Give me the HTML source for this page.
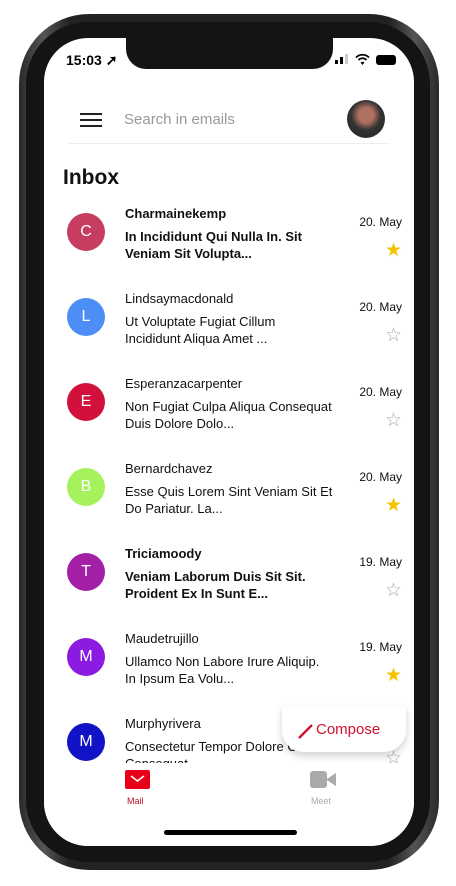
<!DOCTYPE html>
<html><head><meta charset="utf-8"><style>
*{margin:0;padding:0;box-sizing:border-box}
body{width:456px;height:886px;background:#fff;position:relative;overflow:hidden;font-family:"Liberation Sans",sans-serif}
.phone{position:absolute;left:19px;top:14px;width:420px;height:856px;border-radius:70px;background:linear-gradient(90deg,#2a2a2a,#555 6%,#222 12%,#222 88%,#555 94%,#2a2a2a);}
.bezel{position:absolute;left:26px;top:22px;width:404px;height:840px;border-radius:62px;background:#141414}
.screen{position:absolute;left:44px;top:38px;width:370px;height:808px;border-radius:44px;background:#fff;overflow:hidden}
.notch{position:absolute;left:82px;top:0;width:207px;height:31px;background:#141414;border-radius:0 0 20px 20px}
.abs{position:absolute}
.av{position:absolute;left:23px;width:38px;height:38px;border-radius:50%;color:#fff;font-size:16px;text-align:center;line-height:38px}
.nm{position:absolute;left:81px;font-size:13px;color:#111}
.sb{position:absolute;left:81px;font-size:13px;color:#111;line-height:17px;width:220px}
.dt{position:absolute;right:12px;font-size:12px;color:#111}
.st{position:absolute;right:12px;font-size:19px;line-height:19px}
.b{font-weight:bold}
</style></head><body>
<div class="phone"></div>
<div class="bezel"></div>
<div class="screen">
 <div class="notch"></div>
 <div class="abs" style="left:22px;top:14px;font-size:14px;font-weight:bold;color:#000">15:03 ➚</div>
 <div class="abs" style="left:291px;top:22px;width:3px;height:4px;background:#000"></div>
 <div class="abs" style="left:296px;top:19px;width:3px;height:7px;background:#000"></div>
 <div class="abs" style="left:301px;top:16px;width:3px;height:10px;background:#ccc"></div>
 <svg class="abs" style="left:311px;top:15px" width="15" height="12"><path d="M1 4.5A9 9 0 0 1 14 4.5M3.5 7A5.5 5.5 0 0 1 11.5 7" stroke="#000" stroke-width="1.8" fill="none"/><path d="M5.5 9.5L7.5 12L9.5 9.5A3 3 0 0 0 5.5 9.5Z" fill="#000"/></svg>
 <div class="abs" style="left:332px;top:17px;width:20px;height:10px;background:#000;border-radius:3px"></div>
 <svg class="abs" style="left:35px;top:74px" width="24" height="16"><path d="M1 2H23M1 8H23M1 14H23" stroke="#222" stroke-width="2"/></svg>
 <div class="abs" style="left:80px;top:73px;font-size:15px;color:#999">Search in emails</div>
 <div class="abs" style="left:303px;top:62px;width:38px;height:38px;border-radius:50%;background:radial-gradient(circle at 50% 40%,#b07060 0 25%,#333 50%,#222)"></div>
 <div class="abs" style="left:24px;top:105px;width:322px;height:1px;background:#eee"></div>
 <div class="abs b" style="left:19px;top:128px;font-size:21px;color:#111">Inbox</div>

 <div class="av" style="top:175px;background:#c63d5f">C</div>
 <div class="nm b" style="top:168px">Charmainekemp</div>
 <div class="sb b" style="top:190px">In Incididunt Qui Nulla In. Sit Veniam Sit Volupta...</div>
 <div class="dt" style="top:177px">20. May</div>
 <div class="st" style="top:203px;color:#f5c400">★</div>

 <div class="av" style="top:260px;background:#4c8ef6">L</div>
 <div class="nm" style="top:253px">Lindsaymacdonald</div>
 <div class="sb" style="top:275px">Ut Voluptate Fugiat Cillum<br>Incididunt Aliqua Amet ...</div>
 <div class="dt" style="top:262px">20. May</div>
 <div class="st" style="top:288px;color:#aaa">☆</div>

 <div class="av" style="top:345px;background:#d2103c">E</div>
 <div class="nm" style="top:338px">Esperanzacarpenter</div>
 <div class="sb" style="top:360px">Non Fugiat Culpa Aliqua Consequat Duis Dolore Dolo...</div>
 <div class="dt" style="top:347px">20. May</div>
 <div class="st" style="top:373px;color:#aaa">☆</div>

 <div class="av" style="top:430px;background:#a6f25c">B</div>
 <div class="nm" style="top:423px">Bernardchavez</div>
 <div class="sb" style="top:445px">Esse Quis Lorem Sint Veniam Sit Et Do Pariatur. La...</div>
 <div class="dt" style="top:432px">20. May</div>
 <div class="st" style="top:458px;color:#f5c400">★</div>

 <div class="av" style="top:515px;background:#a21fa6">T</div>
 <div class="nm b" style="top:508px">Triciamoody</div>
 <div class="sb b" style="top:530px">Veniam Laborum Duis Sit Sit. Proident Ex In Sunt E...</div>
 <div class="dt" style="top:517px">19. May</div>
 <div class="st" style="top:543px;color:#aaa">☆</div>

 <div class="av" style="top:600px;background:#8b1be0">M</div>
 <div class="nm" style="top:593px">Maudetrujillo</div>
 <div class="sb" style="top:615px">Ullamco Non Labore Irure Aliquip.<br>In Ipsum Ea Volu...</div>
 <div class="dt" style="top:602px">19. May</div>
 <div class="st" style="top:628px;color:#f5c400">★</div>

 <div class="av" style="top:685px;background:#1212c6">M</div>
 <div class="nm" style="top:678px">Murphyrivera</div>
 <div class="sb" style="top:700px;height:25px;overflow:hidden">Consectetur Tempor Dolore Cillum Consequat</div>
 <div class="st" style="top:711px;color:#aaa">☆</div>

 <div class="abs" style="left:238px;top:668px;width:124px;height:46px;border-radius:0 0 22px 22px;background:#fff;box-shadow:0 4px 8px rgba(0,0,0,.18)"></div>
 <svg class="abs" style="left:253px;top:684px" width="18" height="18"><path d="M2 16L15 3" stroke="#d01030" stroke-width="2.4"/></svg>
 <div class="abs" style="left:272px;top:683px;font-size:15px;color:#d01030">Compose</div>

 <div class="abs" style="left:0;top:725px;width:370px;height:83px;background:#fff"></div>
 <div class="abs" style="left:81px;top:732px;width:25px;height:19px;background:#e8001a;border-radius:2px"></div>
 <svg class="abs" style="left:81px;top:732px" width="25" height="19"><path d="M6 6L12.5 11L19 6" stroke="#fff" stroke-width="1.6" fill="none"/></svg>
 <div class="abs" style="left:83px;top:758px;font-size:9px;color:#c0102a">Mail</div>
 <div class="abs" style="left:266px;top:733px;width:17px;height:17px;background:#aaa;border-radius:3px"></div>
 <svg class="abs" style="left:282px;top:733px" width="10" height="17"><path d="M0 8.5L10 2V15Z" fill="#aaa"/></svg>
 <div class="abs" style="left:267px;top:758px;font-size:9px;color:#aaa">Meet</div>
 <div class="abs" style="left:120px;top:792px;width:133px;height:5px;border-radius:3px;background:#000"></div>
</div>
</body></html>
